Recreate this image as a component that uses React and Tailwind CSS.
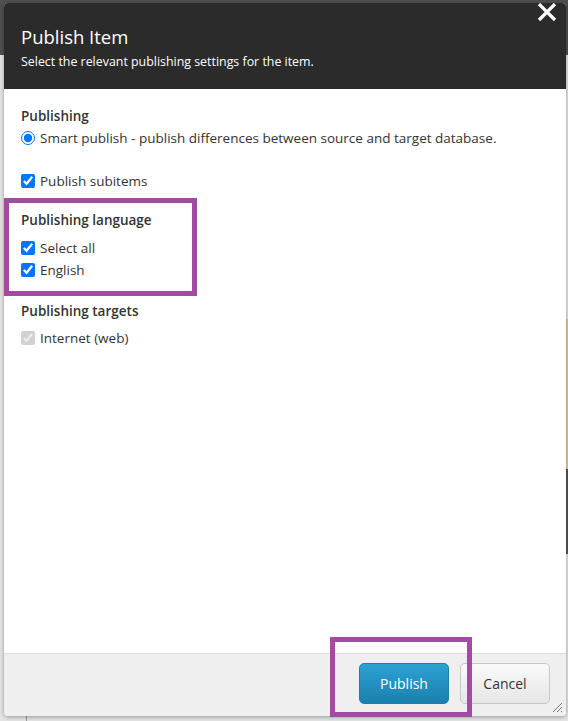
import React from "react";

function Row({ children, className = "" }) {
  return <div className={"flex h-[22px] items-center gap-[5px] " + className}>{children}</div>;
}

function Check({ disabled }) {
  return (
    <input
      type="checkbox"
      defaultChecked
      disabled={disabled}
      className="m-0 h-[14px] w-[14px] accent-[#0075ff]"
    />
  );
}

export default function App() {
  return (
    <div
      className="relative h-[721px] w-[568px] overflow-hidden bg-[#e4e4e4]"
      style={{ fontFamily: '"Open Sans", "Noto Sans", sans-serif' }}
    >
      {/* page behind the dialog */}
      <div className="absolute left-0 top-0 h-[55px] w-full bg-[#4f4f4f]" />
      <div className="absolute right-0 top-[319px] h-[150px] w-[4px] bg-[#d8cf98]" />
      <div className="absolute right-0 top-[469px] h-[85px] w-[4px] bg-[#555]" />
      <div className="absolute bottom-0 left-[26px] h-[6px] w-px bg-[#999]" />

      {/* dialog */}
      <div className="absolute left-[4px] top-[3px] flex h-[713px] w-[562px] flex-col overflow-hidden rounded-[4px] bg-white shadow-[0_1px_4px_rgba(0,0,0,0.35)]">
        <div className="relative h-[86px] shrink-0 bg-[#2b2b2b] px-[17px] pt-[21px] text-white">
          <div className="text-[18.5px] leading-[26px]">Publish Item</div>
          <div className="mt-[3px] text-[12.4px] leading-[18px]">Select the relevant publishing settings for the item.</div>
          <svg className="absolute right-[9px] top-0" width="20" height="19" viewBox="0 0 20 19">
            <path d="M2 1 L18 17 M18 1 L2 17" stroke="#fff" strokeWidth="3.2" strokeLinecap="butt" />
          </svg>
        </div>

        <div className="flex-1 px-[17px] pt-[18px] text-[13.5px] text-[#333]">
          <div className="font-semibold leading-[18px]">Publishing</div>
          <Row className="mt-[2px]">
            <input type="radio" defaultChecked className="m-0 h-[14px] w-[14px] accent-[#0075ff]" />
            <span>Smart publish - publish differences between source and target database.</span>
          </Row>
          <Row className="mt-[21px]">
            <Check />
            <span>Publish subitems</span>
          </Row>
          <div className="mt-[19px] font-semibold leading-[18px]">Publishing language</div>
          <Row className="mt-[8px]">
            <Check />
            <span>Select all</span>
          </Row>
          <Row>
            <Check />
            <span>English</span>
          </Row>
          <div className="mt-[21px] font-semibold leading-[18px]">Publishing targets</div>
          <Row className="mt-[7px]">
            <Check disabled />
            <span>Internet (web)</span>
          </Row>
        </div>

        <div className="relative flex h-[63px] shrink-0 items-start justify-end gap-[11px] border-t border-[#dcdcdc] bg-[#efefef] pr-[16px] pt-[9px]">
          <button className="h-[41px] w-[90px] rounded-[5px] border border-[#1b7eab] bg-gradient-to-b from-[#2ca2d3] to-[#1b80ae] text-[14px] text-white">
            Publish
          </button>
          <button className="h-[41px] w-[90px] rounded-[5px] border border-[#c6c6c6] bg-gradient-to-b from-[#fafafa] to-[#e6e6e6] text-[14px] text-[#333]">
            Cancel
          </button>
          <svg className="absolute bottom-[3px] right-[3px]" width="12" height="12" viewBox="0 0 12 12">
            <path d="M11 2 L2 11 M11 6 L6 11 M11 10 L10 11" stroke="#777" strokeWidth="1" />
          </svg>
        </div>
      </div>

      {/* annotation boxes */}
      <div className="absolute left-[4px] top-[198px] h-[98px] w-[193px] border-[5px] border-[#a04ca2]" />
      <div className="absolute left-[330px] top-[637px] h-[80px] w-[142px] border-[5px] border-[#a04ca2]" />
    </div>
  );
}
